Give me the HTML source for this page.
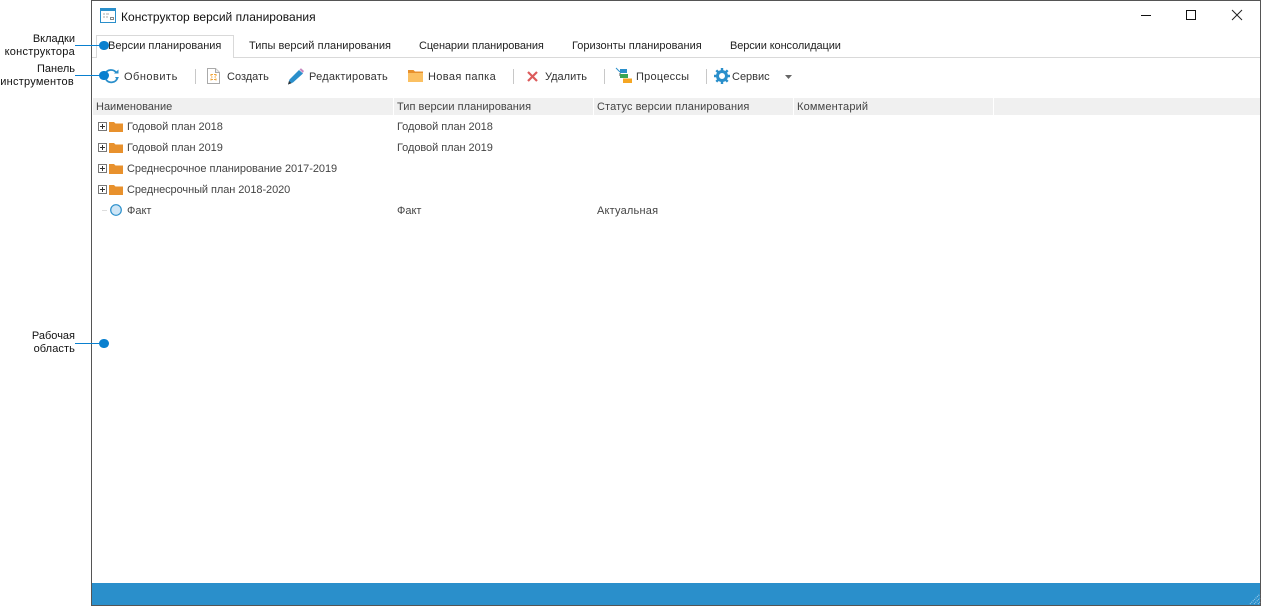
<!DOCTYPE html>
<html lang="ru"><head><meta charset="utf-8"><title>Конструктор версий планирования</title>
<style>
html,body{margin:0;padding:0;background:#fff}
body{width:1261px;height:606px;position:relative;overflow:hidden;font-family:"Liberation Sans",sans-serif;font-size:11px;color:#333}
.t{position:absolute;white-space:nowrap;line-height:14px}
.a{position:absolute}
.sep{position:absolute;top:69px;width:1px;height:15px;background:#c8c8c8}
.hd{position:absolute;top:98px;height:17px;background:#f0f0f0}
.lab{position:absolute;color:#111;text-align:right;line-height:13px;white-space:nowrap;right:1186px}
.w{letter-spacing:.25px}
.dot{position:absolute;width:9.500px;height:9.500px;border-radius:50%;background:#0a80cf}
.ln{position:absolute;height:1px;background:#0a80cf}
svg{position:absolute;overflow:visible}
</style></head><body>

<!-- window frame -->
<div class="a" style="left:91px;top:0;width:1170px;height:1px;background:#555"></div>
<div class="a" style="left:91px;top:0;width:1px;height:606px;background:#555"></div>
<div class="a" style="left:1260px;top:0;width:1px;height:606px;background:#555"></div>
<div class="a" style="left:91px;top:605px;width:1170px;height:1px;background:#555"></div>

<!-- title -->
<svg style="left:100px;top:8px" width="16" height="15" viewBox="0 0 16 15"><rect x=".5" y=".5" width="15" height="14" fill="#fff" stroke="#2a8fcb"/><rect x="0" y="0" width="16" height="3" fill="#2a8fcb"/><path d="M3 6h2M6 6h3M3 9h2M6 9h2" stroke="#aaa"/><rect x="10.500" y="9.500" width="3" height="2" fill="#fff" stroke="#888"/></svg>
<div class="t" style="left:121px;top:10px;font-size:12px;color:#111;letter-spacing:.03px">Конструктор версий планирования</div>

<!-- window controls -->
<div class="a" style="left:1141px;top:15px;width:10px;height:1px;background:#111"></div>
<div class="a" style="left:1186px;top:10px;width:8px;height:8px;border:1px solid #111"></div>
<svg style="left:1232px;top:10px" width="10" height="10" viewBox="0 0 10 10"><path d="M0 0L10 10M10 0L0 10" stroke="#222" stroke-width="1"/></svg>

<!-- tabs -->
<div class="a" style="left:92px;top:57px;width:1168px;height:1px;background:#d9d9d9"></div>
<div class="a" style="left:96px;top:35px;width:138px;height:23px;background:#fff;border:1px solid #d9d9d9;border-bottom:0;box-sizing:border-box"></div>
<div class="t" style="left:108px;top:39px;color:#222">Версии планирования</div>
<div class="t" style="left:249px;top:39px;color:#222;letter-spacing:.04px">Типы версий планирования</div>
<div class="t" style="left:419px;top:39px;color:#222;letter-spacing:-.1px">Сценарии планирования</div>
<div class="t" style="left:572px;top:39px;color:#222">Горизонты планирования</div>
<div class="t" style="left:730px;top:39px;color:#222;letter-spacing:-.1px">Версии консолидации</div>

<!-- toolbar -->
<svg style="left:103px;top:68px" width="16" height="16" viewBox="0 0 16 16"><path d="M2 6A6.500 6.500 0 0 1 13.500 5" fill="none" stroke="#2a8fcb" stroke-width="1.800"/><path d="M14.500 10A6.500 6.500 0 0 1 3 11.500" fill="none" stroke="#2a8fcb" stroke-width="1.800"/><path d="M11 5.500h4.500V1.500z" fill="#2a8fcb"/><path d="M12 9h4l-2 3z" fill="#2a8fcb"/></svg>
<div class="t" style="left:124px;top:70px;letter-spacing:.5px">Обновить</div>
<div class="sep" style="left:195px"></div>
<svg style="left:207px;top:68px" width="14" height="16" viewBox="0 0 14 16"><path d="M.5.500h8l4 4v11H.5z" fill="#fff" stroke="#aaa"/><path d="M8.500.500v4h4" fill="#eee" stroke="#aaa"/><path d="M4 6.500h2M7 6.500h2M4 9h1.500M7.500 9H9M4 11.500h2M7 11.500h2M4 6v2M9 6v2M4 10.500v2M9 10.500v2" stroke="#f0a63c"/></svg>
<div class="t" style="left:227px;top:70px">Создать</div>
<svg style="left:288px;top:68px" width="16" height="17" viewBox="0 0 16 17"><path d="M0 16.500l1.500-5L11 2l4 3.500L5 14.500z" fill="#2a8fcb"/><path d="M0 16.500l1-3.500 2.500 2.300z" fill="#333"/><path d="M11.500 1.500L13 .2l3 2.800L14.800 5z" fill="#c88ac0"/></svg>
<div class="t" style="left:309px;top:70px;letter-spacing:.23px">Редактировать</div>
<svg style="left:408px;top:70px" width="15" height="12" viewBox="0 0 15 12"><path d="M0 0h5.500l1.500 1.500h8V12H0z" fill="#e8912d"/><rect x="0" y="3" width="15" height="9" fill="#fbc062"/></svg>
<div class="t" style="left:428px;top:70px;letter-spacing:.36px">Новая папка</div>
<div class="sep" style="left:513px"></div>
<svg style="left:527px;top:71px" width="11" height="11" viewBox="0 0 11 11"><path d="M1 1L10 10M10 1L1 10" stroke="#dc5b5b" stroke-width="2.200"/></svg>
<div class="t" style="left:545px;top:70px">Удалить</div>
<div class="sep" style="left:604px"></div>
<svg style="left:616px;top:68px" width="16" height="15" viewBox="0 0 16 15"><path d="M0 0l4 4" stroke="#2a8fcb"/><rect x="4" y="1" width="7" height="4" fill="#2a8fcb"/><path d="M4 5v3" stroke="#555"/><rect x="4" y="6" width="8" height="4" fill="#3aa655"/><rect x="7" y="10.500" width="9" height="4.500" fill="#f5a623"/></svg>
<div class="t" style="left:636px;top:70px;letter-spacing:.25px">Процессы</div>
<div class="sep" style="left:706px"></div>
<svg style="left:714px;top:68px" width="16" height="16" viewBox="0 0 16 16"><circle cx="8" cy="8" r="4.500" fill="none" stroke="#2a8fcb" stroke-width="3"/><path d="M8 0v3M8 13v3M0 8h3M13 8h3M2.300 2.300l2.100 2.100M11.600 11.600l2.100 2.100M13.700 2.300l-2.100 2.100M4.400 11.600l-2.100 2.100" stroke="#2a8fcb" stroke-width="2.400"/></svg>
<div class="t" style="left:732px;top:70px">Сервис</div>
<svg style="left:785px;top:75px" width="7" height="4" viewBox="0 0 7 4"><path d="M0 0h7L3.500 4z" fill="#666"/></svg>

<!-- header -->
<div class="hd" style="left:93px;width:300px"></div>
<div class="hd" style="left:394px;width:199px"></div>
<div class="hd" style="left:594px;width:199px"></div>
<div class="hd" style="left:794px;width:199px"></div>
<div class="hd" style="left:994px;width:266px"></div>
<div class="t" style="left:96px;top:100px;color:#444">Наименование</div>
<div class="t" style="left:397px;top:100px;color:#444;letter-spacing:.04px">Тип версии планирования</div>
<div class="t" style="left:597px;top:100px;color:#444;letter-spacing:.11px">Статус версии планирования</div>
<div class="t" style="left:797px;top:100px;color:#444;letter-spacing:.18px">Комментарий</div>

<!-- rows -->
<svg style="left:98px;top:122px" width="25" height="10" viewBox="0 0 25 10"><rect x=".5" y=".5" width="8" height="8" fill="#fff" stroke="#777"/><path d="M2 4.500h5M4.500 2v5" stroke="#333"/><path d="M11 0h5l1.500 1.500H25V10H11z" fill="#e8912d"/></svg>
<div class="t" style="left:127px;top:120px;color:#444;letter-spacing:-.06px">Годовой план 2018</div>
<div class="t" style="left:397px;top:120px;color:#444;letter-spacing:-.06px">Годовой план 2018</div>

<svg style="left:98px;top:143px" width="25" height="10" viewBox="0 0 25 10"><rect x=".5" y=".5" width="8" height="8" fill="#fff" stroke="#777"/><path d="M2 4.500h5M4.500 2v5" stroke="#333"/><path d="M11 0h5l1.500 1.500H25V10H11z" fill="#e8912d"/></svg>
<div class="t" style="left:127px;top:141px;color:#444;letter-spacing:-.06px">Годовой план 2019</div>
<div class="t" style="left:397px;top:141px;color:#444;letter-spacing:-.06px">Годовой план 2019</div>

<svg style="left:98px;top:164px" width="25" height="10" viewBox="0 0 25 10"><rect x=".5" y=".5" width="8" height="8" fill="#fff" stroke="#777"/><path d="M2 4.500h5M4.500 2v5" stroke="#333"/><path d="M11 0h5l1.500 1.500H25V10H11z" fill="#e8912d"/></svg>
<div class="t" style="left:127px;top:162px;color:#444;letter-spacing:-.05px">Среднесрочное планирование 2017-2019</div>

<svg style="left:98px;top:185px" width="25" height="10" viewBox="0 0 25 10"><rect x=".5" y=".5" width="8" height="8" fill="#fff" stroke="#777"/><path d="M2 4.500h5M4.500 2v5" stroke="#333"/><path d="M11 0h5l1.500 1.500H25V10H11z" fill="#e8912d"/></svg>
<div class="t" style="left:127px;top:183px;color:#444;letter-spacing:-.07px">Среднесрочный план 2018-2020</div>

<div class="a" style="left:102px;top:210px;width:5px;height:1px;background:#ddd"></div>
<svg style="left:110px;top:204px" width="12" height="12" viewBox="0 0 12 12"><circle cx="6" cy="6" r="5.300" fill="#cfe6f6" stroke="#2a8fcb" stroke-width="1.200"/></svg>
<div class="t" style="left:127px;top:204px;color:#444">Факт</div>
<div class="t" style="left:397px;top:204px;color:#444">Факт</div>
<div class="t" style="left:597px;top:204px;color:#444;letter-spacing:.2px">Актуальная</div>

<!-- status bar -->
<div class="a" style="left:92px;top:583px;width:1168px;height:22px;background:#2a8fcb"></div>
<svg style="left:1249px;top:593px" width="11" height="12" viewBox="0 0 11 12"><path d="M1 11L11 1M5 11L11 5M9 11l2-2" stroke="#9cc9e6" stroke-width="1.200" stroke-dasharray="1 1"/></svg>

<!-- callouts -->
<div class="lab" style="top:33px">Вкладки<br><span class="w">конструктора</span></div>
<div class="ln" style="left:75px;top:45px;width:27px"></div>
<div class="dot" style="left:99px;top:40.500px"></div>
<div class="lab" style="top:63px">Панель<br><span class="w" style="margin-right:1px">инструментов</span></div>
<div class="ln" style="left:75px;top:75px;width:27px"></div>
<div class="dot" style="left:99px;top:70.500px"></div>
<div class="lab" style="top:330px">Рабочая<br><span style="letter-spacing:.1px">область</span></div>
<div class="ln" style="left:75px;top:343px;width:27px"></div>
<div class="dot" style="left:99px;top:338.500px"></div>

</body></html>
